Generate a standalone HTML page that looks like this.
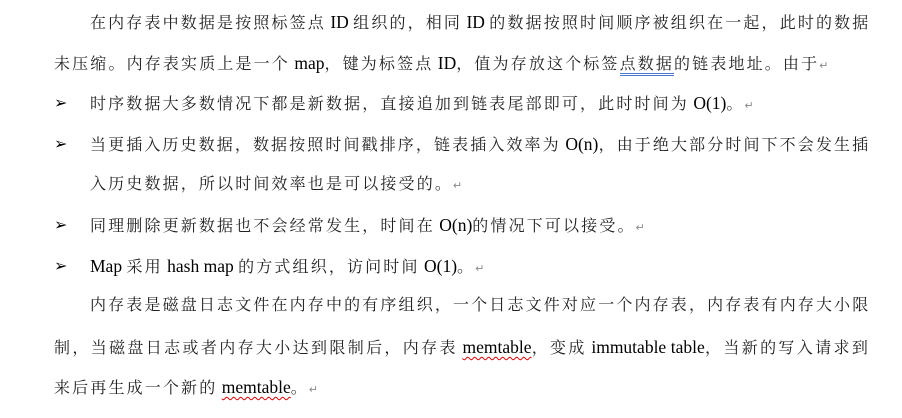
<!DOCTYPE html>
<html><head><meta charset="utf-8"><style>
body{margin:0;width:902px;height:418px;background:#fff;position:relative;overflow:hidden;
font-family:"Liberation Serif","Noto Serif CJK SC",serif;font-size:16px;color:#222;letter-spacing:2.15px;}
.l{position:absolute;height:22px;line-height:22px;white-space:nowrap;}
.j{text-align:justify;text-align-last:justify;}
.b{position:absolute;left:54px;font-size:16px;font-family:"DejaVu Sans",sans-serif;color:#000;letter-spacing:0;font-weight:bold;}
.r{color:#888;font-size:11px;letter-spacing:0;}
i{font-style:normal;font-size:17.5px;letter-spacing:0;color:#000;}
.w{text-decoration:underline wavy #d00;text-decoration-thickness:1px;text-underline-offset:3px;}
.u{border-bottom:3px double #4a7bd0;}
</style></head><body>
<div class="l j" style="left:90px;width:780px;top:11px">在内存表中数据是按照标签点<i> ID </i>组织的，相同<i> ID </i>的数据按照时间顺序被组织在一起，此时的数据</div>
<div class="l" style="left:54px;top:52px">未压缩。内存表实质上是一个<i> map</i>，键为标签点<i> ID</i>，值为存放这个标签<span class="u">点数据</span>的链表地址。由于<span class="r">↵</span></div>
<div class="l b" style="top:92px">➢</div>
<div class="l" style="left:90px;top:92px">时序数据大多数情况下都是新数据，直接追加到链表尾部即可，此时时间为<i> O(1)</i>。<span class="r">↵</span></div>
<div class="l b" style="top:133px">➢</div>
<div class="l j" style="left:90px;width:780px;top:133px;letter-spacing:1.9px">当更插入历史数据，数据按照时间戳排序，链表插入效率为<i> O(n)</i>，由于绝大部分时间下不会发生插</div>
<div class="l" style="left:90px;top:174px">入历史数据，所以时间效率也是可以接受的。<span class="r">↵</span></div>
<div class="l b" style="top:214px">➢</div>
<div class="l" style="left:90px;top:214px">同理删除更新数据也不会经常发生，时间在<i> O(n)</i>的情况下可以接受。<span class="r">↵</span></div>
<div class="l b" style="top:255px">➢</div>
<div class="l" style="left:90px;top:255px"><i>Map </i>采用<i> hash map </i>的方式组织，访问时间<i> O(1)</i>。<span class="r">↵</span></div>
<div class="l j" style="left:90px;width:780px;top:295px">内存表是磁盘日志文件在内存中的有序组织，一个日志文件对应一个内存表，内存表有内存大小限</div>
<div class="l j" style="left:54px;width:816px;top:336px">制，当磁盘日志或者内存大小达到限制后，内存表<i> </i><i class="w">memtable</i>，变成<i> immutable table</i>，当新的写入请求到</div>
<div class="l" style="left:54px;top:376px">来后再生成一个新的<i> </i><i class="w">memtable</i>。<span class="r">↵</span></div>
</body></html>
